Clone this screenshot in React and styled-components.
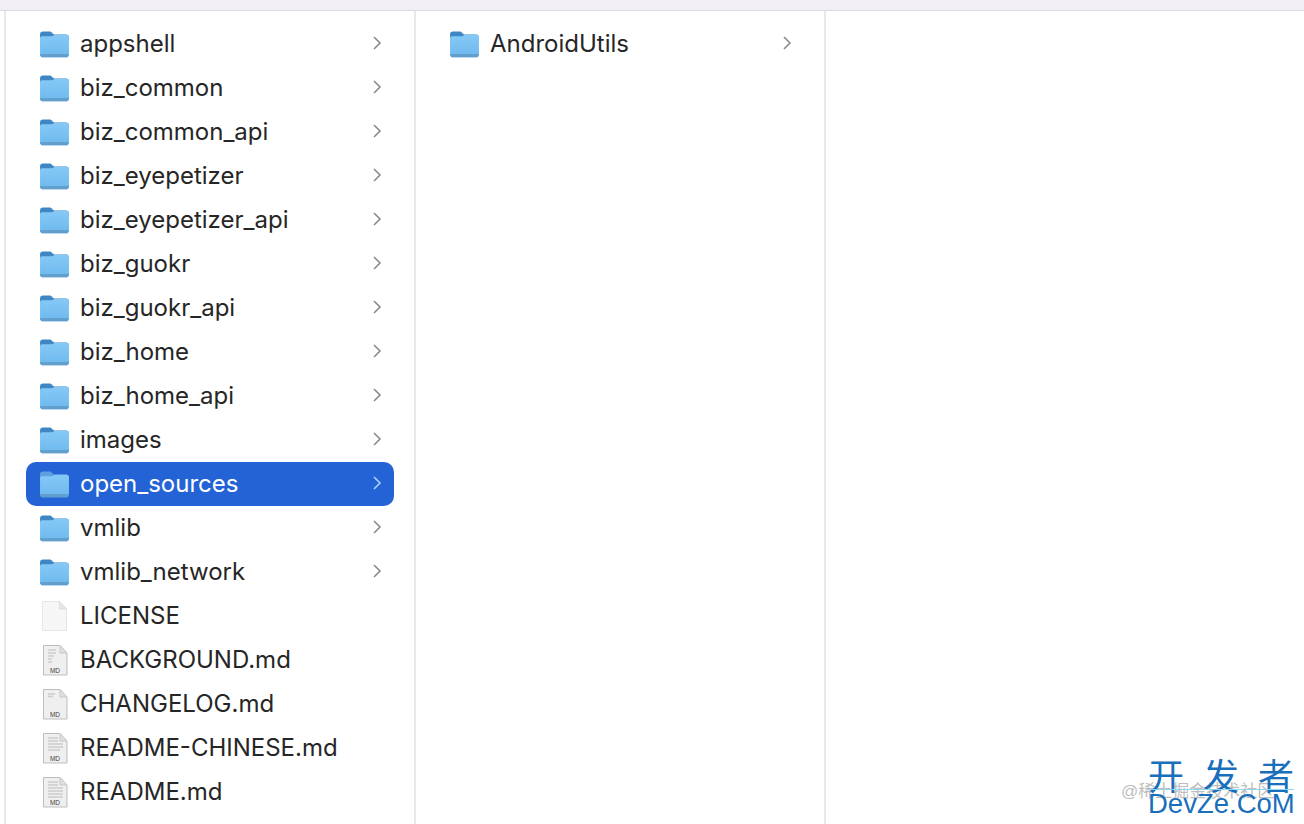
import React from 'react'
import styled, { createGlobalStyle } from 'styled-components'

const GlobalStyle = createGlobalStyle`
    html, body {
        margin: 0;
        padding: 0;
        background: #ffffff;
    }
`

const leftItems = [
    { name: 'appshell', type: 'folder' },
    { name: 'biz_common', type: 'folder' },
    { name: 'biz_common_api', type: 'folder' },
    { name: 'biz_eyepetizer', type: 'folder' },
    { name: 'biz_eyepetizer_api', type: 'folder' },
    { name: 'biz_guokr', type: 'folder' },
    { name: 'biz_guokr_api', type: 'folder' },
    { name: 'biz_home', type: 'folder' },
    { name: 'biz_home_api', type: 'folder' },
    { name: 'images', type: 'folder' },
    { name: 'open_sources', type: 'folder', selected: true },
    { name: 'vmlib', type: 'folder' },
    { name: 'vmlib_network', type: 'folder' },
    { name: 'LICENSE', type: 'blank' },
    { name: 'BACKGROUND.md', type: 'md', lines: 'M6 5h8M6 8h8M6 11h6M6 14h4M6 17h4' },
    { name: 'CHANGELOG.md', type: 'md', lines: 'M6 5h7M6 7.500h5' },
    { name: 'README-CHINESE.md', type: 'md', lines: 'M6 5h10M6 8h10M6 11h15M6 14h15M6 17h12' },
    { name: 'README.md', type: 'md', lines: 'M6 5h10M6 8h10M6 11h15M6 14h15M6 17h15M6 20h15' },
]

const FolderIcon = ({ selected }) => (
    <svg width="29" height="27" viewBox="0 0 30 28">
        <defs>
            <linearGradient id="folderBody" x1="0" y1="0" x2="0" y2="1">
                <stop offset="0" stopColor="#86c9f6" />
                <stop offset="1" stopColor="#6cb8ee" />
            </linearGradient>
        </defs>
        <path d="M0 3.500C0 1.600 1.200.6 3 .6h6.600c1.400 0 2.100.5 3 1.500.8.9 1.400 1.400 2.600 1.400H27c1.800 0 3 1.100 3 3v3H0z" fill={selected ? '#5f9fe0' : '#3f86c4'} />
        <path d="M0 7.500c0-1.200.8-2 2-2h9.500c1.200 0 1.900-.4 2.700-1 .5-.3 1-.5 1.600-.5H27.500c1.500 0 2.500 1 2.500 2.500V24c0 2-1.200 3.200-3.200 3.200H3.200C1.200 27.200 0 26 0 24z" fill="url(#folderBody)" />
        <path d="M0 23.800h30V24c0 2-1.200 3.200-3.200 3.200H3.200C1.200 27.200 0 26 0 24z" fill="#639fcd" />
    </svg>
)

const BlankIcon = () => (
    <svg width="27" height="30" viewBox="0 0 27 30">
        <path d="M1.500.5h17l7 7.500V29.500h-24z" fill="#f6f6f6" stroke="#e6e6e6" />
        <path d="M18.500.5V8h7z" fill="#e6e6e6" stroke="#dedede" />
    </svg>
)

const MdIcon = ({ lines }) => (
    <svg width="26" height="31" viewBox="0 0 26 31">
        <path d="M1.500.5h16.500l7 7.500V30H1.500z" fill="#efefef" stroke="#bdbdbd" />
        <path d="M18 .5V8h7z" fill="#e0e0e0" stroke="#c8c8c8" />
        <path d={lines} stroke="#cdcdcd" strokeWidth="1.500" />
        <MdLabel x="13" y="27.500" textAnchor="middle">MD</MdLabel>
    </svg>
)

const Chevron = ({ selected }) => (
    <ChevronSvg viewBox="0 0 10 14" $selected={selected}>
        <path d="M2 1l6 6-6 6" fill="none" stroke="currentColor" strokeWidth="1.600" />
    </ChevronSvg>
)

const FileRow = ({ name, type, selected, lines }) => (
    <Row $selected={selected}>
        <IconSlot>
            {type === 'folder' && <FolderIcon selected={selected} />}
            {type === 'blank' && <BlankIcon />}
            {type === 'md' && <MdIcon lines={lines} />}
        </IconSlot>
        <Name>{name}</Name>
        {type === 'folder' && <Chevron selected={selected} />}
    </Row>
)

const App = () => {
    return (
        <Window>
            <GlobalStyle />
            <TopBar />
            <Columns>
                <Gutter />
                <Column>
                    {leftItems.map((item) => (
                        <FileRow key={item.name} {...item} />
                    ))}
                </Column>
                <Column>
                    <FileRow name="AndroidUtils" type="folder" />
                </Column>
                <Empty />
            </Columns>
            <Watermark>
                <Credit>@稀土掘金技术社区</Credit>
                <BrandCn>
                    <span>开</span>
                    <span>发</span>
                    <span>者</span>
                </BrandCn>
                <BrandLine />
                <BrandEn>DevZe.CoM</BrandEn>
            </Watermark>
        </Window>
    )
}

export default App

const Window = styled.div`
    width: 1304px;
    height: 824px;
    overflow: hidden;
    position: relative;
    display: flex;
    flex-direction: column;
    background: #ffffff;
    font-family: Inter, "Liberation Sans", sans-serif;
`
const TopBar = styled.div`
    flex: none;
    height: 10px;
    background: #f1eff3;
    border-bottom: 1px solid #dcdbdd;
`
const Columns = styled.div`
    flex: 1;
    display: flex;
    min-height: 0;
`
const Gutter = styled.div`
    flex: none;
    width: 4px;
    border-right: 2px solid #e8e8e8;
`
const Column = styled.div`
    flex: none;
    width: 368px;
    padding: 11px 20px 0;
    border-right: 2px solid #e8e8e8;
`
const Empty = styled.div`
    flex: 1;
`
const Row = styled.div`
    height: 44px;
    display: flex;
    align-items: center;
    padding: 0 12px 0 14px;
    border-radius: 10px;
    background: ${({ $selected }) => ($selected ? '#2463d6' : 'transparent')};
    color: ${({ $selected }) => ($selected ? '#ffffff' : '#262626')};
`
const IconSlot = styled.div`
    flex: none;
    width: 29px;
    margin-right: 11px;
    display: flex;
    justify-content: center;
    align-items: center;
`
const Name = styled.span`
    flex: 1;
    margin-bottom: 2px;
    font-size: 24px;
    white-space: nowrap;
`
const ChevronSvg = styled.svg`
    flex: none;
    width: 10px;
    height: 14px;
    margin-bottom: 2px;
    color: ${({ $selected }) => ($selected ? '#a9d2fb' : '#8a8a8a')};
`
const MdLabel = styled.text`
    font-family: "Liberation Sans", sans-serif;
    font-size: 6.500px;
    fill: #444444;
`
const Watermark = styled.div`
    position: absolute;
    right: 10px;
    bottom: 2px;
    width: 146px;
    height: 62px;
`
const Credit = styled.span`
    position: absolute;
    left: -27px;
    top: 22px;
    font-size: 17px;
    line-height: 20px;
    color: #bdbdbd;
    white-space: nowrap;
    font-family: "Liberation Sans", "Noto Sans CJK SC", sans-serif;
`
const BrandCn = styled.div`
    position: absolute;
    left: 0;
    right: 0;
    top: -7px;
    display: flex;
    justify-content: space-between;
    font-size: 36px;
    line-height: 42px;
    color: #1a6fbd;
    font-family: "Noto Sans CJK SC", sans-serif;
`
const BrandLine = styled.div`
    position: absolute;
    left: 0;
    right: 0;
    top: 29px;
    height: 1px;
    background: #8fd6f0;
`
const BrandEn = styled.span`
    position: absolute;
    left: 0;
    top: 27px;
    font-size: 27.500px;
    line-height: 34px;
    color: #1a6fbd;
    white-space: nowrap;
    font-family: "Liberation Sans", sans-serif;
`
